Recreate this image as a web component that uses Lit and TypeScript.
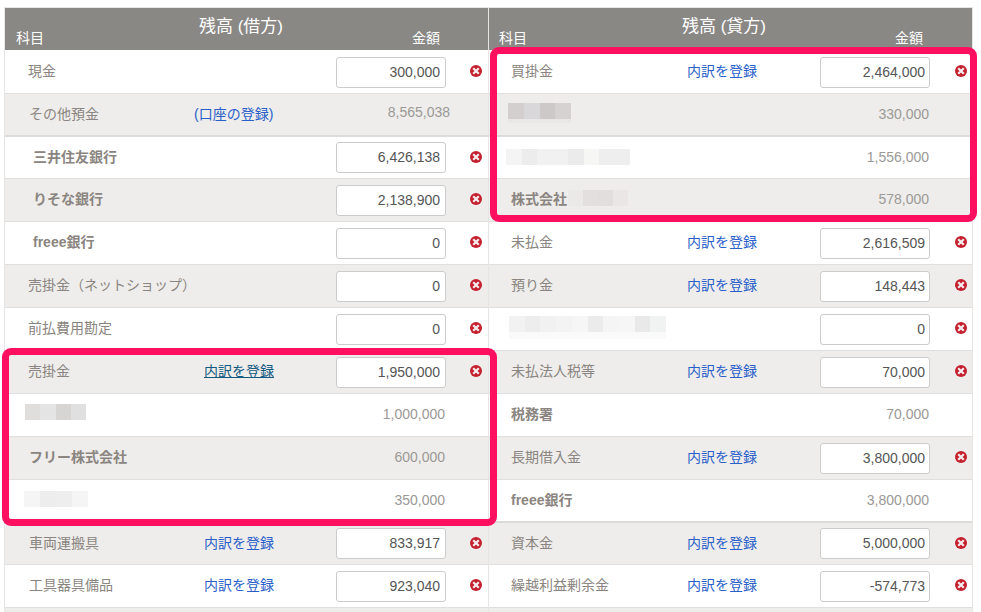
import { LitElement, html, css, nothing } from "lit";
import { customElement } from "lit/decorators.js";

type Blur = { w: number; cells: string[]; offset: number; lift: number; fade?: string; fadeH?: number };
type Row = {
  label?: string;
  bold?: boolean;
  indent?: number;
  link?: string;
  hover?: boolean;
  value: string;
  input?: boolean;
  blur?: Blur;
  suffix?: { w: number; cells: string[] };
  tall?: boolean;
};

const left: Row[] = [
  { label: "現金", value: "300,000", input: true, indent: 23 },
  { label: "その他預金", link: "(口座の登録)", value: "8,565,038", indent: 24, tall: true },
  { label: "三井住友銀行", bold: true, value: "6,426,138", input: true, indent: 28 },
  { label: "りそな銀行", bold: true, value: "2,138,900", input: true, indent: 28 },
  { label: "freee銀行", bold: true, value: "0", input: true, indent: 28 },
  { label: "売掛金（ネットショップ）", value: "0", input: true, indent: 23 },
  { label: "前払費用勘定", value: "0", input: true, indent: 23 },
  { label: "売掛金", link: "内訳を登録", hover: true, value: "1,950,000", input: true, indent: 23 },
  { blur: { w: 61, cells: ["#dfdedd", "#e4e4e5", "#d6d5d3", "#dfe0df"], offset: 20, lift: 6 }, value: "1,000,000" },
  { label: "フリー株式会社", bold: true, value: "600,000", indent: 24 },
  { blur: { w: 64, cells: ["#f5f5f5", "#ededee", "#eeeeee", "#f5f5f5"], offset: 19, lift: 3 }, value: "350,000", tall: true },
  { label: "車両運搬具", link: "内訳を登録", value: "833,917", input: true, indent: 24 },
  { label: "工具器具備品", link: "内訳を登録", value: "923,040", input: true, indent: 24 },
];

const right: Row[] = [
  { label: "買掛金", link: "内訳を登録", value: "2,464,000", input: true, indent: 22 },
  { blur: { w: 63, cells: ["#d3cfcf", "#d9d7da", "#cdc9c8", "#d5d2d1"], offset: 19, lift: 3, fade: "#e9e8e6", fadeH: 4 }, value: "330,000", tall: true },
  { blur: { w: 124, cells: ["#f4f4f4", "#ececed", "#f1f1f1", "#f1f1f1", "#ebebec", "#f6f6f5", "#eeeeef", "#eeeeef"], offset: 17, lift: 2 }, value: "1,556,000" },
  { label: "株式会社", bold: true, value: "578,000", indent: 22, suffix: { w: 60, cells: ["#ebe9e8", "#e3dfde", "#e2dede", "#e9e6e5"] } },
  { label: "未払金", link: "内訳を登録", value: "2,616,509", input: true, indent: 22 },
  { label: "預り金", link: "内訳を登録", value: "148,443", input: true, indent: 22 },
  { blur: { w: 157, cells: ["#f2f2f2", "#ededee", "#f1f1f1", "#f3f3f3", "#f6f6f6", "#ebebec", "#f5f5f5", "#f6f6f6", "#e9e9ea", "#f1f2f2"], offset: 20, lift: 3, fade: "#fafafa", fadeH: 7 }, value: "0", input: true },
  { label: "未払法人税等", link: "内訳を登録", value: "70,000", input: true, indent: 22 },
  { label: "税務署", bold: true, value: "70,000", indent: 22 },
  { label: "長期借入金", link: "内訳を登録", value: "3,800,000", input: true, indent: 22 },
  { label: "freee銀行", bold: true, value: "3,800,000", indent: 22, tall: true },
  { label: "資本金", link: "内訳を登録", value: "5,000,000", input: true, indent: 22 },
  { label: "繰越利益剰余金", link: "内訳を登録", value: "-574,773", input: true, indent: 22 },
];

@customElement("app-root")
export class AppRoot extends LitElement {
  static styles = css`
    :host {
      display: block;
      width: 981px;
      height: 612px;
      position: relative;
      overflow: hidden;
      background: #fff;
      font-family: "Liberation Sans", "Noto Sans CJK JP", sans-serif;
      font-size: 14px;
      color: #8a8580;
    }
    .sheet {
      display: grid;
      grid-template-columns: 485px 484px;
      padding: 7px 0 0 4px;
    }
    .side {
      display: flex;
      flex-direction: column;
      min-width: 0;
      border-top: 1px solid #e6e5e4;
      border-right: 1px solid #e6e5e4;
    }
    .side.left {
      border-left: 1px solid #e6e5e4;
    }
    .head {
      height: 43px;
      background: #8a8885;
      color: #fff;
      display: grid;
      grid-template-columns: 11px 150px 1fr 76px;
      box-sizing: border-box;
      border-bottom: 1px solid #fff;
    }
    .head .subject {
      grid-column: 1 / span 2;
      padding: 20px 0 0 11px;
      line-height: 20px;
    }
    .head .title {
      font-size: 17px;
      line-height: 20px;
      padding-top: 9px;
      margin-left: -96px;
      text-align: center;
    }
    .head .amount {
      padding-top: 20px;
      line-height: 20px;
    }
    .row {
      height: 43px;
      box-sizing: border-box;
      border-bottom: 1px solid #e0dfdd;
      display: grid;
      grid-template-columns: 199px 132px 110px 42px;
      align-items: center;
      background: #fff;
    }
    .row.tall {
      border-bottom: 2px solid #dcdbd9;
    }
    .row.short {
      height: 42px;
    }
    .row.grey {
      background: #eeedeb;
    }
    .cell {
      padding-bottom: 2px;
      min-width: 0;
    }
    .labelrow {
      display: flex;
      align-items: center;
    }
    .name {
      white-space: nowrap;
      line-height: 20px;
    }
    .name.bold {
      font-weight: 700;
    }
    .blur {
      display: flex;
      height: 16px;
    }
    .blur i {
      flex: 1;
    }
    .suffix {
      margin-left: 1px;
      margin-bottom: 2px;
    }
    .link {
      color: #2a5fc9;
      line-height: 20px;
      white-space: nowrap;
    }
    .link.hover {
      color: #10597f;
      text-decoration: underline;
    }
    .box {
      width: 110px;
      height: 31px;
      box-sizing: border-box;
      background: #fff;
      border: 1px solid #ccc;
      border-radius: 3px;
      color: #555;
      text-align: right;
      padding-right: 5px;
      line-height: 29px;
    }
    .num {
      grid-column: 2 / span 2;
      text-align: right;
      padding-right: 1px;
      color: #9b9996;
    }
    .num.split {
      display: flex;
      justify-content: space-between;
      padding-right: 0;
    }
    .num.split .link {
      margin-left: -10px;
    }
    .num.split .val {
      margin-right: -4px;
    }
    .del {
      justify-self: start;
      margin: 0 0 2px 24px;
      width: 12px;
      height: 12px;
      display: block;
    }
    .right .row {
      grid-template-columns: 198px 133px 110px 42px;
    }
    .right .del {
      margin-left: 25px;
    }
    .right .box {
      padding-right: 4px;
    }
    .right .head {
      grid-template-columns: 11px 150px 1fr 77px;
    }
    .right .head .subject {
      padding-left: 10px;
    }
    .right .head .title {
      margin-left: -97px;
    }
    .tail {
      height: 4px;
      background: #eeedeb;
    }
    .mark {
      position: absolute;
      box-sizing: border-box;
      border: 7px solid #ff0f5f;
      border-radius: 9px;
    }
    .mark.a {
      left: 2px;
      top: 348px;
      width: 495px;
      height: 178px;
    }
    .mark.b {
      left: 490px;
      top: 47px;
      width: 487px;
      height: 175px;
    }
  `;

  private icon() {
    return html`<svg class="del" viewBox="0 0 12 12" aria-hidden="true">
      <circle cx="6" cy="6" r="6" fill="#c4202f"></circle>
      <path d="M4 4l4 4M8 4l-4 4" stroke="#f6eeee" stroke-width="2.2" stroke-linecap="square"></path>
    </svg>`;
  }

  private cells(cells: string[]) {
    return cells.map((c) => html`<i style="background:${c}"></i>`);
  }

  private renderLabel(r: Row) {
    if (r.blur) {
      const b = r.blur;
      return html`<div style="padding-left:${b.offset}px;padding-bottom:${b.lift}px">
        <div class="blur" style="width:${b.w}px">${this.cells(b.cells)}</div>
        ${b.fade
          ? html`<div style="width:${b.w}px;height:${b.fadeH}px;background:${b.fade}"></div>`
          : nothing}
      </div>`;
    }
    return html`<div class="cell labelrow" style="padding-left:${r.indent}px">
      <span class="name ${r.bold ? "bold" : ""}">${r.label}</span>
      ${r.suffix
        ? html`<div class="blur suffix" style="width:${r.suffix.w}px">${this.cells(r.suffix.cells)}</div>`
        : nothing}
    </div>`;
  }

  private renderValue(r: Row) {
    if (r.input) {
      return html`<div class="cell">
          ${r.link ? html`<span class="link ${r.hover ? "hover" : ""}">${r.link}</span>` : nothing}
        </div>
        <div class="box">${r.value}</div>
        ${this.icon()}`;
    }
    if (r.link) {
      return html`<div class="cell num split">
          <span class="link">${r.link}</span><span class="val">${r.value}</span>
        </div>
        <span></span>`;
    }
    return html`<div class="cell num">${r.value}</div>
      <span></span>`;
  }

  private renderRow(r: Row, i: number, rows: Row[]) {
    const cls = `row ${i % 2 ? "grey" : ""} ${r.tall ? "tall" : ""} ${rows[i - 1]?.tall ? "short" : ""}`;
    return html`<div class=${cls}>${this.renderLabel(r)}${this.renderValue(r)}</div>`;
  }

  private renderSide(cls: string, title: string, rows: Row[]) {
    return html`<section class="side ${cls}">
      <div class="head">
        <div class="subject">科目</div>
        <div class="title">${title}</div>
        <div class="amount">金額</div>
      </div>
      ${rows.map((r, i) => this.renderRow(r, i, rows))}
      <div class="tail"></div>
    </section>`;
  }

  render() {
    return html`<div class="sheet">
        ${this.renderSide("left", "残高 (借方)", left)}
        ${this.renderSide("right", "残高 (貸方)", right)}
      </div>
      <div class="mark a"></div>
      <div class="mark b"></div>`;
  }
}
